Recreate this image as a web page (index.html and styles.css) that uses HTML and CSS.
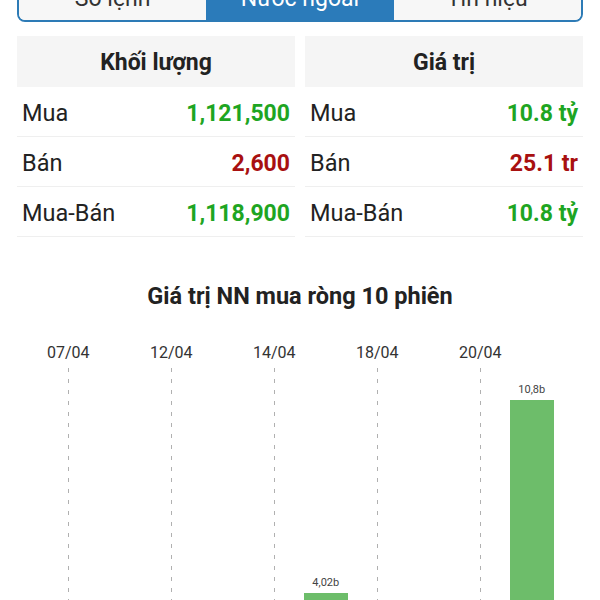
FILE: index.html
```html
<!DOCTYPE html>
<html lang="vi">
<head>
  <meta charset="UTF-8" />
  <meta name="viewport" content="width=device-width, initial-scale=1.0"/>
  <title>Nước ngoài</title>
  <link rel="stylesheet" href="styles.css">
</head>
<body>
  <div class="tabs">
    <div class="tab">Sổ lệnh</div>
    <div class="tab active">Nước ngoài</div>
    <div class="tab">Tín hiệu</div>
  </div>

  <div class="cards">
    <div class="card">
      <div class="card-head">Khối lượng</div>
      <div class="row"><span>Mua</span><b class="up">1,121,500</b></div>
      <div class="row"><span>Bán</span><b class="down">2,600</b></div>
      <div class="row"><span>Mua-Bán</span><b class="up">1,118,900</b></div>
    </div>
    <div class="card">
      <div class="card-head">Giá trị</div>
      <div class="row"><span>Mua</span><b class="up">10.8 tỷ</b></div>
      <div class="row"><span>Bán</span><b class="down">25.1 tr</b></div>
      <div class="row"><span>Mua-Bán</span><b class="up">10.8 tỷ</b></div>
    </div>
  </div>

  <h2 class="chart-title">Giá trị NN mua ròng 10 phiên</h2>

  <div class="chart">
    <div class="col tick"><div class="date">07/04</div><div class="plot"></div></div>
    <div class="col"><div class="date"></div><div class="plot"></div></div>
    <div class="col tick"><div class="date">12/04</div><div class="plot"></div></div>
    <div class="col"><div class="date"></div><div class="plot"></div></div>
    <div class="col tick"><div class="date">14/04</div><div class="plot"></div></div>
    <div class="col"><div class="date"></div><div class="plot">
      <div class="bar-label">4,02b</div><div class="bar" style="height: 114px"></div>
    </div></div>
    <div class="col tick"><div class="date">18/04</div><div class="plot"></div></div>
    <div class="col"><div class="date"></div><div class="plot"></div></div>
    <div class="col tick"><div class="date">20/04</div><div class="plot"></div></div>
    <div class="col"><div class="date"></div><div class="plot">
      <div class="bar-label">10,8b</div><div class="bar" style="height: 307px"></div>
    </div></div>
  </div>
</body>
</html>
```

FILE: styles.css
```css
* {
  margin: 0;
  padding: 0;
  box-sizing: border-box;
}

html, body {
  overflow: hidden;
}

body {
  background: #fff;
  color: #222;
  font-family: Roboto, "Noto Sans", sans-serif;
}

/* tabs (cut off at the top) */
.tabs {
  display: flex;
  height: 48px;
  margin: -26px 17px 0;
  border: 2px solid #2d7bb6;
  border-radius: 8px;
  overflow: hidden;
}

.tab {
  flex: 1;
  display: flex;
  align-items: center;
  justify-content: center;
  background: #f7f7f7;
  color: #333;
  font-size: 23px;
}

.tab.active {
  background: #2b7bba;
  color: #fff;
}

/* summary cards */
.cards {
  display: grid;
  grid-template-columns: 1fr 1fr;
  gap: 10px;
  margin: 14px 17px 0;
}

.card-head {
  height: 51px;
  display: flex;
  align-items: center;
  justify-content: center;
  padding-top: 2px;
  background: #f5f5f5;
  font-size: 23px;
  font-weight: bold;
}

.row {
  height: 50px;
  display: flex;
  align-items: center;
  justify-content: space-between;
  padding: 3px 5px 0;
  border-bottom: 1px solid #efefef;
  font-size: 23.5px;
}

.row b {
  font-size: 23px;
}

.up { color: #1ea522; }
.down { color: #a81010; }

/* chart */
.chart-title {
  margin-top: 47px;
  text-align: center;
  font-size: 23.5px;
  line-height: 24px;
  font-weight: bold;
}

.chart {
  display: grid;
  grid-template-columns: repeat(10, 51.5px);
  justify-content: center;
  margin-top: 34px;
}

.col {
  display: flex;
  flex-direction: column;
}

.date {
  height: 22px;
  margin-bottom: 4px;
  text-align: center;
  font-size: 16px;
  line-height: 22px;
  color: #333;
  white-space: nowrap;
}

.plot {
  height: 339px;
  display: flex;
  flex-direction: column;
  justify-content: flex-end;
  align-items: center;
}

.tick .plot {
  background: repeating-linear-gradient(to bottom, #b0b0b0 0 4px, transparent 4px 11px) center top / 1px 100% no-repeat;
}

.bar {
  width: 44px;
  background: #6dbd6a;
}

.bar-label {
  margin-bottom: 4px;
  font-size: 11px;
  line-height: 13px;
  color: #444;
}
```
